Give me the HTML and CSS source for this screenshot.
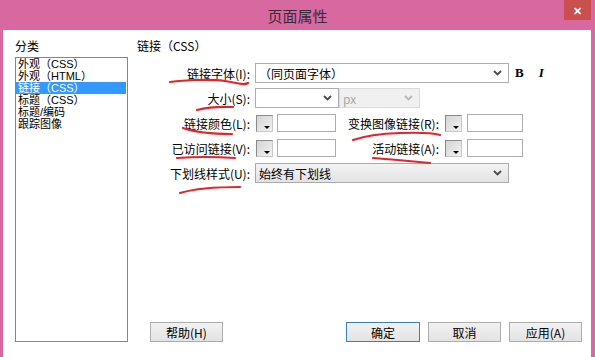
FILE: index.html
```html
<!DOCTYPE html>
<html lang="zh">
<head>
  <meta charset="UTF-8">
  <title>页面属性</title>
  <link rel="stylesheet" href="styles.css">
</head>
<body>
  <div class="titlebar">
    页面属性
    <div class="close">&#x2715;</div>
  </div>
  <div class="client">
    <div class="side">
      <div class="heading">分类</div>
      <div class="list">
        <div class="item">外观（CSS）</div>
        <div class="item">外观（HTML）</div>
        <div class="item selected">链接（CSS）</div>
        <div class="item">标题（CSS）</div>
        <div class="item">标题/编码</div>
        <div class="item">跟踪图像</div>
      </div>
    </div>
    <div class="main">
      <div class="heading">链接（CSS）</div>
      <div class="form">
        <div class="row">
          <div class="label">链接字体(I):</div>
          <div class="combo wide"><span>（同页面字体）</span><svg class="chev" width="9" height="6"><path d="M1 1 L4.5 4.5 L8 1" /></svg></div>
          <span class="fmt-b">B</span>
          <span class="fmt-i">I</span>
        </div>
        <div class="row">
          <div class="label">大小(S):</div>
          <div class="combo size"><span></span><svg class="chev" width="9" height="6"><path d="M1 1 L4.5 4.5 L8 1" /></svg></div>
          <div class="combo unit"><span>px</span><svg class="chev off" width="9" height="6"><path d="M1 1 L4.5 4.5 L8 1" /></svg></div>
        </div>
        <div class="row">
          <div class="label">链接颜色(L):</div>
          <div class="swatch"></div>
          <div class="field"></div>
          <div class="label2">变换图像链接(R):</div>
          <div class="swatch"></div>
          <div class="field short"></div>
        </div>
        <div class="row">
          <div class="label">已访问链接(V):</div>
          <div class="swatch"></div>
          <div class="field"></div>
          <div class="label2">活动链接(A):</div>
          <div class="swatch"></div>
          <div class="field short"></div>
        </div>
        <div class="row">
          <div class="label">下划线样式(U):</div>
          <div class="combo wide styled"><span>始终有下划线</span><svg class="chev" width="9" height="6"><path d="M1 1 L4.5 4.5 L8 1" /></svg></div>
        </div>
      </div>
      <div class="buttons">
        <div class="btn">帮助(H)</div>
        <div class="btn primary">确定</div>
        <div class="btn">取消</div>
        <div class="btn">应用(A)</div>
      </div>
    </div>
  </div>

  <!-- hand-drawn red marks over the labels -->
  <svg class="marks" width="595" height="357">
    <path d="M170 82 C 185 80, 210 79, 225 81 S 244 86, 248 83" />
    <path d="M197 110 Q 212 106 233 107" />
    <path d="M183 128 Q 200 134 232 134" />
    <path d="M177 158 Q 205 156 235 158" />
    <path d="M180 193 Q 200 187 240 187" />
    <path d="M353 140 Q 370 134 400 133 T 440 135" />
    <path d="M373 158 Q 400 160 430 163" />
  </svg>
</body>
</html>
```

FILE: styles.css
```css
body {
  margin: 0;
  width: 595px;
  height: 357px;
  overflow: hidden;
  position: relative;
  background: #d768a0;
  font-family: "Noto Sans CJK SC", "Liberation Sans", sans-serif;
  font-size: 12px;
  color: #000;
}

.titlebar {
  height: 30px;
  display: flex;
  justify-content: center;
  align-items: center;
  font-size: 15px;
  color: #3a2a33;
}
.close {
  position: absolute;
  top: 0;
  right: 4px;
  width: 27px;
  height: 20px;
  background: #c9504f;
  color: #fff;
  font-size: 11px;
  font-weight: bold;
  display: flex;
  align-items: center;
  justify-content: center;
}

.client {
  margin: 0 4px 0 3px;
  height: 327px;
  box-sizing: border-box;
  background: #fff;
  padding: 9px 9px 15px 12px;
  display: flex;
  gap: 9px;
}

.heading {
  height: 14px;
  line-height: 14px;
}

.side {
  width: 113px;
  display: flex;
  flex-direction: column;
}
.list {
  margin-top: 4px;
  flex: 1;
  border: 1px solid #828790;
  font-family: "Liberation Sans", "Noto Sans CJK SC", sans-serif;
  font-size: 11px;
}
.item {
  height: 12px;
  line-height: 12px;
  padding-left: 2px;
  white-space: nowrap;
  overflow: hidden;
}
.item.selected {
  background: #3399ff;
  color: #fff;
  margin-right: 1px;
}

.main {
  flex: 1;
  display: flex;
  flex-direction: column;
}
.form {
  margin-top: 10px;
  display: flex;
  flex-direction: column;
  gap: 5px;
}
.row {
  display: flex;
  align-items: center;
  height: 20px;
}
.label {
  width: 113px;
  flex-shrink: 0;
  margin-right: 5px;
  text-align: right;
  white-space: nowrap;
}
.label2 {
  width: 97px;
  flex-shrink: 0;
  margin: 0 5px 0 6px;
  text-align: right;
  white-space: nowrap;
}

.combo {
  height: 20px;
  box-sizing: border-box;
  border: 1px solid #abadb3;
  background: #fff;
  display: flex;
  align-items: center;
  justify-content: space-between;
  padding: 0 6px 0 3px;
}
.combo.wide { width: 254px; }
.combo.size { width: 84px; }
.combo.unit {
  width: 81px;
  background: #f0f0f0;
  border-color: #dadada;
  color: #a8a8a8;
}
.combo.styled {
  background: linear-gradient(#f3f3f3, #e3e3e3);
  border-color: #acacac;
}
.chev path {
  fill: none;
  stroke: #4a4a4a;
  stroke-width: 1.8;
}
.chev.off path { stroke: #b8b8b8; }

.fmt-b {
  margin-left: 6px;
  font-family: "Liberation Serif", serif;
  font-weight: bold;
  font-size: 13px;
}
.fmt-i {
  margin-left: 15px;
  font-family: "Liberation Serif", serif;
  font-weight: bold;
  font-style: italic;
  font-size: 13px;
}

.swatch {
  width: 17px;
  height: 17px;
  box-sizing: border-box;
  margin-left: 1px;
  border: 1px solid #8a8a8a;
  border-right-color: #c8c8c8;
  border-bottom-color: #c8c8c8;
  background: linear-gradient(135deg, #d4d4d4, #f2f2f2);
  position: relative;
}
.swatch::after {
  content: "";
  position: absolute;
  right: 2px;
  bottom: 2px;
  border-left: 3px solid transparent;
  border-right: 3px solid transparent;
  border-top: 3px solid #000;
}
.field {
  width: 59px;
  height: 18px;
  box-sizing: border-box;
  margin-left: 4px;
  border: 1px solid #abadb3;
  background: #fff;
}
.field.short {
  width: 56px;
  margin-left: 5px;
}

.buttons {
  margin-top: auto;
  padding-left: 13px;
  display: flex;
}
.btn {
  width: 73px;
  height: 20px;
  box-sizing: border-box;
  border: 1px solid #acacac;
  background: linear-gradient(#f2f2f2, #e3e3e3);
  display: flex;
  align-items: center;
  justify-content: center;
  margin-left: 8px;
}
.btn:first-child { margin-left: 0; }
.btn.primary {
  margin-left: auto;
  width: 74px;
  border-color: #3c7fb1;
}

.marks {
  position: absolute;
  top: 0;
  left: 0;
  pointer-events: none;
}
.marks path {
  fill: none;
  stroke: #e3242b;
  stroke-width: 2.2;
  stroke-linecap: round;
}
```
